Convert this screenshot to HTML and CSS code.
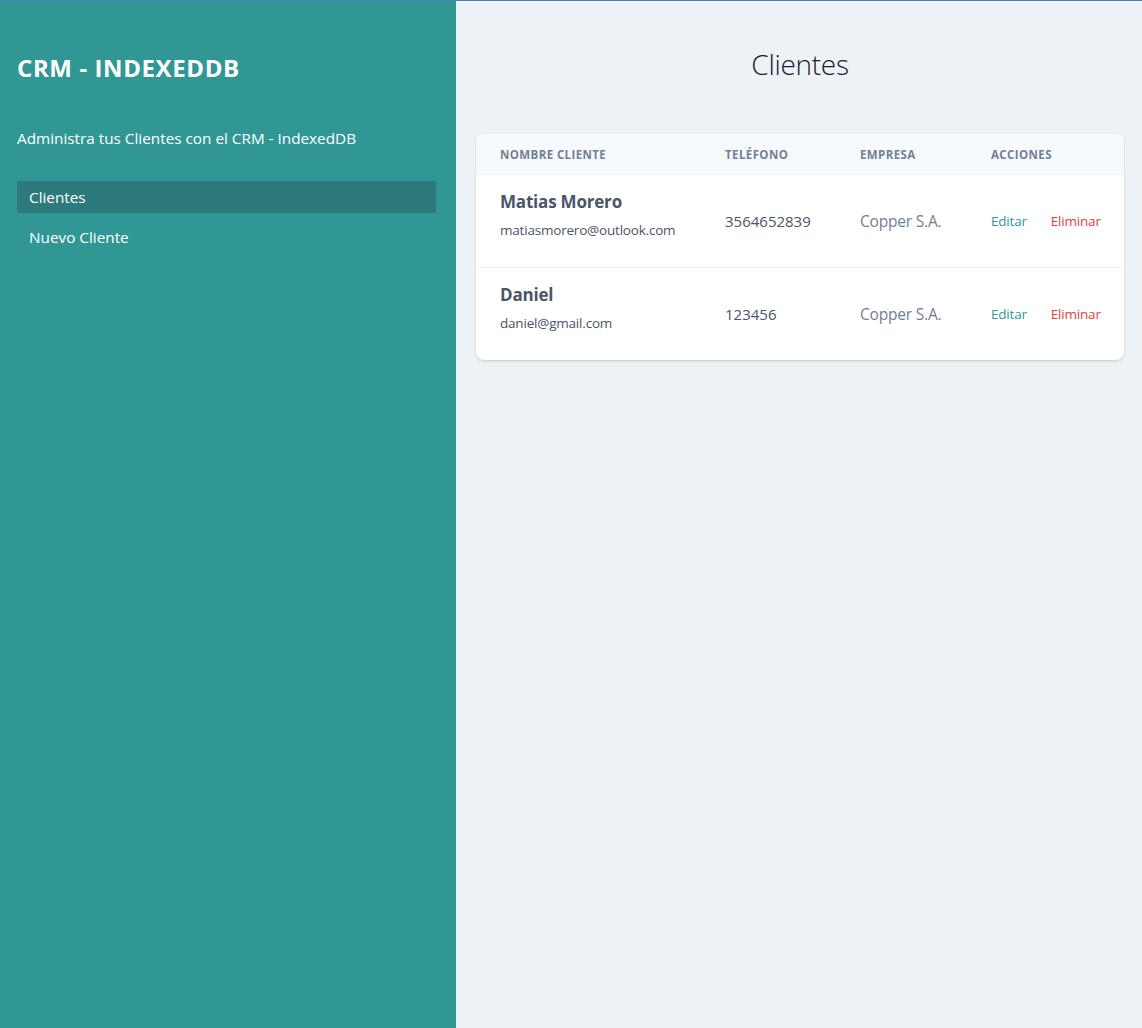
FILE: index.html
```html
<!DOCTYPE html>
<html lang="es">
<head>
<meta charset="utf-8">
<title>CRM - IndexedDB</title>
<link rel="stylesheet" href="styles.css">
</head>
<body>
<div class="topline"></div>
<div class="layout">
  <aside class="sidebar">
    <h1 class="brand">CRM - INDEXEDDB</h1>
    <p class="tagline">Administra tus Clientes con el CRM - IndexedDB</p>
    <nav class="nav">
      <a class="nav-item active" href="#">Clientes</a>
      <a class="nav-item" href="#">Nuevo Cliente</a>
    </nav>
  </aside>
  <main class="main">
    <h2 class="page-title">Clientes</h2>
    <div class="card">
      <table class="table">
        <colgroup>
          <col class="c1"><col class="c2"><col class="c3"><col class="c4">
        </colgroup>
        <thead>
          <tr>
            <th>Nombre Cliente</th>
            <th>Teléfono</th>
            <th>Empresa</th>
            <th>Acciones</th>
          </tr>
        </thead>
        <tbody>
          <tr>
            <td class="client"><div class="name">Matias Morero</div><div class="email">matiasmorero@outlook.com</div></td>
            <td class="phone">3564652839</td>
            <td class="company">Copper S.A.</td>
            <td class="actions"><a class="edit" href="#">Editar</a><a class="del" href="#">Eliminar</a></td>
          </tr>
          <tr>
            <td class="client"><div class="name">Daniel</div><div class="email">daniel@gmail.com</div></td>
            <td class="phone">123456</td>
            <td class="company">Copper S.A.</td>
            <td class="actions"><a class="edit" href="#">Editar</a><a class="del" href="#">Eliminar</a></td>
          </tr>
        </tbody>
      </table>
    </div>
  </main>
</div>
</body>
</html>
```

FILE: styles.css
```css
* { box-sizing: border-box; }
html, body { margin: 0; padding: 0; height: 100%; }
body {
  font-family: "Open Sans", "Noto Sans", sans-serif;
  background: #edf2f7;
  display: flex;
  flex-direction: column;
}
.topline { height: 1px; background: #4b7fbf; flex: none; }
.layout { display: flex; flex: 1; }
.sidebar {
  width: 456px;
  flex: none;
  background: #319795;
  padding: 51px 20px 0 17px;
  color: #fff;
}
.brand {
  margin: 0;
  font-size: 24px;
  font-weight: 700;
  letter-spacing: 0.6px;
  line-height: 32px;
}
.tagline {
  margin: 42px 0 0;
  font-size: 15.3px;
  line-height: 24px;
}
.nav { margin-top: 31px; display: flex; flex-direction: column; gap: 8px; }
.nav-item {
  display: block;
  height: 32px;
  line-height: 32px;
  padding: 0 12px;
  color: #fff;
  text-decoration: none;
  font-size: 15.3px;
}
.nav-item.active { background: #2c7a7b; }
.main { flex: 1; padding: 0 18px 0 20px; }
.page-title {
  margin: 43px 0 0;
  text-align: center;
  font-size: 28px;
  font-weight: 300;
  line-height: 40px;
  color: #1a202c;
  letter-spacing: -0.3px;
}
.card {
  margin-top: 50px;
  background: #fff;
  border-radius: 8px;
  overflow: hidden;
  box-shadow: 0 1px 3px rgba(0,0,0,0.12), 0 1px 2px rgba(0,0,0,0.06);
}
.table { width: 100%; border-collapse: collapse; table-layout: fixed; }
.c1 { width: 225px; }
.c2 { width: 135px; }
.c3 { width: 131px; }
.table th {
  background: #f7fafc;
  text-align: left;
  font-size: 11.5px;
  font-weight: 700;
  color: #718096;
  text-transform: uppercase;
  letter-spacing: 0.4px;
  height: 40px;
  padding: 2px 0 0 24px;
  border-bottom: 1px solid #edf2f7;
}
.table td {
  padding: 0 0 0 24px;
  height: 93px;
  border-bottom: 1px solid #edf2f7;
  vertical-align: middle;
  white-space: nowrap;
}
.table td.client { padding-bottom: 11px; }
.table tbody tr:last-child td { border-bottom: none; }
.name { font-size: 17px; font-weight: 700; color: #4a5568; line-height: 24px; letter-spacing: -0.2px; }
.email { font-size: 13.5px; color: #4a5568; line-height: 20px; margin-top: 6px; letter-spacing: -0.2px; }
.phone { font-size: 15px; color: #4a5568; }
.company { font-size: 15.5px; color: #718096; letter-spacing: -0.2px; }
.actions { font-size: 13.5px; }
.actions a { text-decoration: none; letter-spacing: -0.2px; }
.edit { color: #319795; margin-right: 24px; }
.del { color: #e53e3e; }
```
